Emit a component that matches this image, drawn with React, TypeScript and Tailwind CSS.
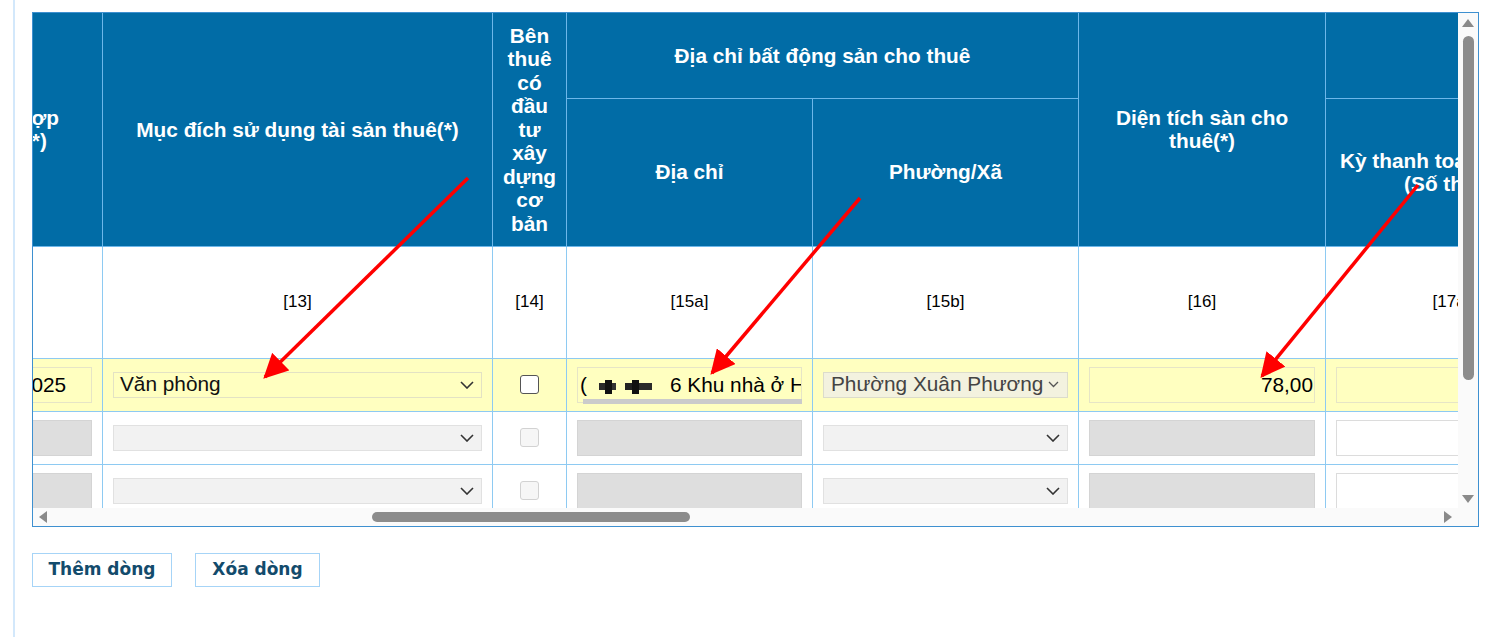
import React from "react";

const th = "bg-[#016ca6] text-white font-bold text-[20.8px] leading-[23.5px] border border-[#6db7ea] text-center align-middle";
const td = "border border-[#8ecaf2] align-middle";

function Chevron({ small = false }: { small?: boolean }) {
  return small ? (
    <svg width="11" height="7" viewBox="0 0 11 7" className="shrink-0">
      <path d="M1 1l4.5 4.5L10 1" fill="none" stroke="#555" strokeWidth="1.3" />
    </svg>
  ) : (
    <svg width="14" height="8" viewBox="0 0 14 8" className="shrink-0">
      <path d="M1 1l6 6 6-6" fill="none" stroke="#333" strokeWidth="1.6" />
    </svg>
  );
}

function Select({ value, tone }: { value?: string; tone: "yellow" | "beige" | "off" }) {
  const bg =
    tone === "yellow"
      ? "bg-[#ffffc0] border-[#e3e2c4] text-[#111]"
      : tone === "beige"
      ? "bg-[#f3f2df] border-[#dcdccb] text-[#444]"
      : "bg-[#f2f2f2] border-[#e1e1e1]";
  return (
    <div
      className={`h-[26px] border ${bg} flex items-center justify-between overflow-hidden ${
        tone === "beige" ? "pl-[7px] pr-[8px]" : "pl-[6px] pr-[7px]"
      }`}
    >
      <span className="text-[20.8px] leading-none whitespace-nowrap">{value}</span>
      <Chevron small={tone === "beige"} />
    </div>
  );
}

function Box({ tone, children, right }: { tone: "yellow" | "grey" | "white"; children?: React.ReactNode; right?: boolean }) {
  const bg =
    tone === "yellow"
      ? "bg-[#ffffc0] border-[#e6e5c6]"
      : tone === "grey"
      ? "bg-[#dedede] border-[#d4d4d4]"
      : "bg-white border-[#dcdcdc]";
  return (
    <div
      className={`h-[36px] border ${bg} flex items-center overflow-hidden text-[20.8px] whitespace-nowrap ${
        right ? "justify-end pr-[1px]" : "pl-[2px]"
      }`}
    >
      {children}
    </div>
  );
}

function Check({ on }: { on: boolean }) {
  return on ? (
    <div className="mx-auto w-[19px] h-[19px] rounded-[3px] border-[1.5px] border-[#555] bg-white" />
  ) : (
    <div className="mx-auto w-[19px] h-[19px] rounded-[3px] border border-[#d2d2d2] bg-[#f6f6f6]" />
  );
}

function EmptyRow() {
  return (
    <tr className="h-[53px]">
      <td className={`${td} px-[10px]`}><Box tone="grey" /></td>
      <td className={`${td} px-[10px]`}><Select tone="off" /></td>
      <td className={td}><Check on={false} /></td>
      <td className={`${td} px-[10px]`}><Box tone="grey" /></td>
      <td className={`${td} px-[10px]`}><Select tone="off" /></td>
      <td className={`${td} px-[10px]`}><Box tone="grey" /></td>
      <td className={`${td} px-[10px]`}><Box tone="white" /></td>
      <td className={`${td} px-[10px]`}><Box tone="white" /></td>
    </tr>
  );
}

export default function App() {
  return (
    <div className="relative min-h-[637px] bg-white font-['Liberation_Sans',Arial,sans-serif] text-black">
      <div className="ml-[13px] min-h-[637px] border-l-2 border-[#d3e8fb] pl-[17px] pt-[12px]">
        <div className="w-[1447px] border border-[#3e90d0] grid grid-cols-[1fr_20px] grid-rows-[495px_18px]">
          {/* visible part of the wide table */}
          <div className="overflow-hidden">
            <table className="table-fixed border-collapse ml-[-115px] w-[1859px]">
              <colgroup>
                <col className="w-[184px]" />
                <col className="w-[390px]" />
                <col className="w-[74px]" />
                <col className="w-[246px]" />
                <col className="w-[266px]" />
                <col className="w-[247px]" />
                <col className="w-[252px]" />
                <col className="w-[200px]" />
              </colgroup>
              <thead>
                <tr className="h-[85px]">
                  <th rowSpan={2} className={`${th} border-t-0`}>
                    Ngày hợp<br />đồng(*)
                  </th>
                  <th rowSpan={2} className={`${th} border-t-0 whitespace-nowrap`}>Mục đích sử dụng tài sản thuê(*)</th>
                  <th rowSpan={2} className={`${th} border-t-0`}>
                    Bên<br />thuê<br />có<br />đầu<br />tư<br />xây<br />dựng<br />cơ<br />bản
                  </th>
                  <th colSpan={2} className={`${th} border-t-0`}>Địa chỉ bất động sản cho thuê</th>
                  <th rowSpan={2} className={`${th} border-t-0`}>
                    Diện tích sàn cho<br />thuê(*)
                  </th>
                  <th colSpan={2} className={`${th} border-t-0`}></th>
                </tr>
                <tr className="h-[148px]">
                  <th className={th}>Địa chỉ</th>
                  <th className={th}>Phường/Xã</th>
                  <th className={`${th} whitespace-nowrap pl-[8px]`}>
                    Kỳ thanh toán tiền thuê<br />(Số tháng)
                  </th>
                  <th className={th}>Giá cho thuê</th>
                </tr>
              </thead>
              <tbody>
                <tr className="h-[112px] text-[17px]">
                  <td className={`${td} text-center`}>[12]</td>
                  <td className={`${td} text-center`}>[13]</td>
                  <td className={`${td} text-center`}>[14]</td>
                  <td className={`${td} text-center`}>[15a]</td>
                  <td className={`${td} text-center`}>[15b]</td>
                  <td className={`${td} text-center`}>[16]</td>
                  <td className={`${td} text-center`}>[17a]</td>
                  <td className={`${td} text-center`}>[17b]</td>
                </tr>
                <tr className="h-[53px] bg-[#ffffc0]">
                  <td className={`${td} px-[10px]`}>
                    <Box tone="yellow">
                      <span className="pl-[30px]">01/01/2025</span>
                    </Box>
                  </td>
                  <td className={`${td} px-[10px]`}>
                    <Select tone="yellow" value="Văn phòng" />
                  </td>
                  <td className={td}>
                    <Check on />
                  </td>
                  <td className={`${td} px-[10px]`}>
                    <div className="relative">
                      <Box tone="yellow">
                        <span>(</span>
                        <span className="ml-[12px] inline-flex items-start h-[14px] translate-y-[2px]">
                          <span className="w-[6px] h-[7px] mt-[3px] bg-[#2a2a2a]" />
                          <span className="w-[7px] h-[14px] bg-[#111]" />
                          <span className="w-[4px] h-[7px] mt-[3px] bg-[#333]" />
                        </span>
                        <span className="ml-[9px] inline-flex items-start h-[14px] translate-y-[2px]">
                          <span className="w-[7px] h-[7px] mt-[3px] bg-[#222]" />
                          <span className="w-[7px] h-[14px] bg-[#111]" />
                          <span className="w-[13px] h-[7px] mt-[3px] bg-[#2a2a2a]" />
                        </span>
                        <span className="ml-[18px]">6 Khu nhà ở Hoàng Mai</span>
                      </Box>
                      <div className="absolute left-[6px] right-0 bottom-[-1px] h-[5px] bg-[#cbcbcb]" />
                    </div>
                  </td>
                  <td className={`${td} px-[10px]`}>
                    <Select tone="beige" value="Phường Xuân Phương" />
                  </td>
                  <td className={`${td} px-[10px]`}>
                    <Box tone="yellow" right>
                      78,00
                    </Box>
                  </td>
                  <td className={`${td} px-[10px]`}>
                    <Box tone="yellow" />
                  </td>
                  <td className={`${td} px-[10px]`}>
                    <Box tone="yellow" />
                  </td>
                </tr>
                <EmptyRow />
                <EmptyRow />
              </tbody>
            </table>
          </div>

          {/* vertical scrollbar */}
          <div className="bg-[#fafafa] flex flex-col items-center">
            <svg width="12" height="8" viewBox="0 0 12 8" className="mt-[6px]">
              <path d="M6 0L12 8H0z" fill="#8a8a8a" />
            </svg>
            <div className="mt-[9px] w-[11px] h-[344px] rounded-full bg-[#8c8c8c]" />
            <div className="flex-1" />
            <svg width="12" height="8" viewBox="0 0 12 8" className="mb-[5px]">
              <path d="M0 0H12L6 8z" fill="#8a8a8a" />
            </svg>
          </div>

          {/* horizontal scrollbar */}
          <div className="bg-[#fafafa] flex items-center">
            <svg width="8" height="12" viewBox="0 0 8 12" className="ml-[6px]">
              <path d="M0 6L8 0V12z" fill="#8a8a8a" />
            </svg>
            <div className="ml-[325px] w-[318px] h-[10px] rounded-full bg-[#8c8c8c]" />
            <div className="flex-1" />
            <svg width="8" height="12" viewBox="0 0 8 12" className="mr-[6px]">
              <path d="M8 6L0 0V12z" fill="#8a8a8a" />
            </svg>
          </div>
          <div className="bg-[#fafafa]" />
        </div>

        <div className="mt-[26px] flex gap-[23px] font-['DejaVu_Sans',Verdana,sans-serif] font-bold text-[17px] text-[#134b6c]">
          <button className="w-[140px] h-[34px] border border-[#a6d4f7] bg-white">Thêm dòng</button>
          <button className="w-[125px] h-[34px] border border-[#a6d4f7] bg-white">Xóa dòng</button>
        </div>
      </div>

      {/* annotation arrows */}
      <svg className="absolute inset-0 pointer-events-none" width="1500" height="637" viewBox="0 0 1500 637">
        <defs>
          <marker id="head" viewBox="0 0 10 10" refX="9" refY="5" markerWidth="7" markerHeight="7" markerUnits="strokeWidth" orient="auto">
            <path d="M0 0L10 5L0 10z" fill="#f00" />
          </marker>
        </defs>
        <line x1="468" y1="178" x2="265" y2="377" stroke="#f00" strokeWidth="3.5" markerEnd="url(#head)" />
        <line x1="860" y1="198" x2="712" y2="373" stroke="#f00" strokeWidth="3.5" markerEnd="url(#head)" />
        <line x1="1418" y1="185" x2="1262" y2="376" stroke="#f00" strokeWidth="3.5" markerEnd="url(#head)" />
      </svg>
    </div>
  );
}
